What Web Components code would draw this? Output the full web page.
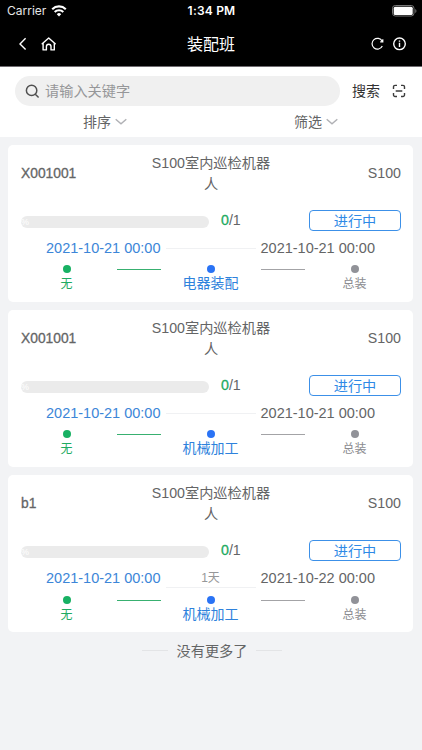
<!DOCTYPE html>
<html lang="zh-CN">
<head>
<meta charset="UTF-8">
<meta name="viewport" content="width=device-width, initial-scale=1">
<title>装配班</title>
<style>
  body {
    margin: 0;
    background-color: #f2f3f5;
    font-family: "Liberation Sans", "Noto Sans CJK SC", sans-serif;
    font-size: 14px;
    color: #646566;
  }
</style>
</head>
<body>
<work-app></work-app>

<script>
class StatusBar extends HTMLElement {
  constructor() {
    super();
    this.attachShadow({ mode: 'open' });
  }

  connectedCallback() {
    this.shadowRoot.innerHTML = `
      <style>
        :host {
          display: grid;
          grid-template-columns: 1fr auto 1fr;
          align-items: center;
          height: 22px;
          padding: 0 5px 0 7px;
          background-color: #000;
          color: #fff;
          font: 12px/22px Inter, sans-serif;
        }
        .carrier { display: flex; align-items: center; gap: 5px; color: #e6e6e6; }
        .time { font-weight: 600; letter-spacing: .2px; margin-left: -1px; }
        .battery { justify-self: end; }
        svg { display: block; }
      </style>
      <div class="carrier">
        <span>Carrier</span>
        <svg width="16" height="12" viewBox="0 0 16 12" fill="none" stroke="#fff" stroke-width="2.1">
          <path d="M1.2 4.2a9.7 9.7 0 0 1 13.6 0M3.7 7a6.1 6.1 0 0 1 8.6 0"/>
          <path d="M8 11.4 5.8 9.2a3.1 3.1 0 0 1 4.4 0z" fill="#fff" stroke="none"/>
        </svg>
      </div>
      <div class="time">1:34 PM</div>
      <svg class="battery" width="25" height="12" viewBox="0 0 25 12">
        <rect x=".5" y=".5" width="21.5" height="10.5" rx="2.8" fill="none" stroke="#777"/>
        <rect x="1.7" y="1.7" width="19" height="8.2" rx="1.5" fill="#fff"/>
        <path d="M23.3 4v4c1.5-.7 1.5-3.3 0-4z" fill="#777"/>
      </svg>
    `;
  }
}

class NavBar extends HTMLElement {
  constructor() {
    super();
    this.attachShadow({ mode: 'open' });
  }

  connectedCallback() {
    this.shadowRoot.innerHTML = `
      <style>
        :host {
          display: grid;
          grid-template-columns: 1fr auto 1fr;
          align-items: center;
          height: 44px;
          padding: 0 15px 0 18px;
          background-color: #000;
          color: #fff;
          border-bottom: 1px solid #6f6b70;
        }
        .title { font-size: 16px; line-height: 24px; margin-left: -3px; padding-top: 1px; }
        .left, .right { display: flex; align-items: center; }
        .left { gap: 13px; }
        .right { gap: 8px; justify-content: flex-end; }
        svg { display: block; fill: none; stroke: #fff; stroke-width: 1.4; }
      </style>
      <div class="left">
        <svg width="10" height="14" viewBox="0 0 10 14"><path d="m7.6 1.3-5.6 5.6 5.6 5.6"/></svg>
        <svg width="16" height="14" viewBox="0 0 16 14" stroke-linejoin="round" stroke-linecap="round">
          <path d="M1.2 6.7 7.7.9l6.5 5.8M2.1 6.1v6.8h3.3V9.6a2.3 2.3 0 0 1 4.6 0v3.3h3.3V6.1"/>
        </svg>
      </div>
      <div class="title"><slot></slot></div>
      <div class="right">
        <svg width="14" height="14" viewBox="0 0 14 14" style="stroke-width:1.2">
          <path d="M11.3 9.1A5.4 5.4 0 1 1 11.2 4.2M11.8 2.2v2.7H9.2"/>
        </svg>
        <svg width="14" height="14" viewBox="0 0 14 14">
          <circle cx="6.5" cy="6.8" r="5.8"/><path d="M6.5 3.4v1.3M6.5 5.8v4.3"/>
        </svg>
      </div>
    `;
  }
}

class SearchPanel extends HTMLElement {
  constructor() {
    super();
    this.attachShadow({ mode: 'open' });
  }

  connectedCallback() {
    this.shadowRoot.innerHTML = `
      <style>
        :host { display: block; height: 70px; background-color: #fff; }
        .row { display: flex; align-items: center; padding: 9px 16px 0 15px; }
        .field {
          display: flex;
          align-items: center;
          gap: 6px;
          box-sizing: border-box;
          width: 325px;
          height: 30px;
          padding-left: 10px;
          border-radius: 15px;
          background-color: #f0f0f0;
          color: #969799;
        }
        .field span { font-size: 14.2px; margin: -2px 0 0 -1px; }
        .action { margin: -2px 12px 0 12px; color: #323233; }
        .filters { display: flex; margin-top: 5px; line-height: 22px; }
        .filter { flex: 1; display: flex; justify-content: center; align-items: center; gap: 4px; margin-left: -1px; }
        svg { display: block; fill: none; }
      </style>
      <div class="row">
        <div class="field">
          <svg width="15" height="15" viewBox="0 0 15 15" stroke="#505050" stroke-width="1.5">
            <circle cx="6.6" cy="6.4" r="5.2"/><path d="m10.3 10.2 3.3 3.3"/>
          </svg>
          <span>请输入关键字</span>
        </div>
        <span class="action">搜索</span>
        <svg width="14" height="14" viewBox="0 0 14 14" stroke="#3c3c3c" stroke-width="1.4">
          <path d="M5 1.4H3a1.5 1.5 0 0 0-1.5 1.5v2M9 1.4h2a1.5 1.5 0 0 1 1.5 1.5v2M1.5 9v2A1.5 1.5 0 0 0 3 12.5h2M12.5 9v2a1.5 1.5 0 0 1-1.5 1.5H9M3.7 7h6.6"/>
        </svg>
      </div>
      <div class="filters">
        ${['排序', '筛选'].map((name) => `
          <div class="filter">
            <span>${name}</span>
            <svg width="12" height="8" viewBox="0 0 12 8" stroke="#b0b1b5" stroke-width="1.4"><path d="m.7 1.2 5.3 4.6 5.3-4.6"/></svg>
          </div>`).join('')}
      </div>
    `;
  }
}

class StepNode extends HTMLElement {
  constructor() {
    super();
    this.attachShadow({ mode: 'open' });
  }

  connectedCallback() {
    this.shadowRoot.innerHTML = `
      <style>
        :host {
          display: flex;
          flex-direction: column;
          align-items: center;
          width: 100px;
          color: #8b8c90;
          font-size: 12px;
          line-height: 22px;
        }
        :host([state="done"]) { color: #1fab62; }
        :host([state="active"]) { color: #2e82dc; font-size: 14px; line-height: 21px; }
        i { width: 8px; height: 8px; border-radius: 50%; background-color: #919298; }
        :host([state="done"]) i { background-color: #18b163; }
        :host([state="active"]) i { background-color: #2a73f5; }
      </style>
      <i></i>
      <slot></slot>
    `;
  }
}

class TaskCard extends HTMLElement {
  constructor() {
    super();
    this.attachShadow({ mode: 'open' });
  }

  connectedCallback() {
    const get = (name) => this.getAttribute(name) || '';
    this.shadowRoot.innerHTML = `
      <style>
        :host {
          display: block;
          box-sizing: border-box;
          height: 157px;
          padding: 8px 12px 0 13px;
          border-radius: 5px;
          background-color: #fff;
        }
        .head { display: grid; grid-template-columns: 1fr 126px 1fr; align-items: center; height: 41px; }
        .code { -webkit-text-stroke: .3px; font-size: 13.8px; }
        .name { text-align: center; font-size: 14.2px; line-height: 20.5px; }
        .model { text-align: right; font-size: 14.2px; margin-top: -1px; }
        .progress { display: flex; align-items: center; height: 21px; margin-top: 16px; }
        .track {
          width: 188px;
          height: 12px;
          margin-top: 3px;
          border-radius: 6px;
          background-color: #ebebeb;
          color: #fff;
          font-size: 9px;
          line-height: 12px;
          overflow: hidden;
        }
        .count { margin: -2px 0 0 12px; font-size: 14.2px; }
        .count b { color: #1fab62; font-weight: normal; -webkit-text-stroke: .3px; }
        .state {
          box-sizing: border-box;
          width: 92px;
          height: 21px;
          margin-left: auto;
          border: 1px solid #3c90e8;
          border-radius: 4px;
          color: #2e8ae6;
          font-size: 14.2px;
          line-height: 21px;
          text-align: center;
        }
        .dates { display: flex; align-items: center; height: 20px; margin: 7px 26px 0 25px; font-size: 14.5px; white-space: nowrap; }
        .start { color: #3c86d8; }
        .days {
          flex: 1;
          box-sizing: border-box;
          margin: 0 5px 0 5px;
          border-bottom: 1px solid #f0f1f3;
          color: #969799;
          font-size: 12px;
          line-height: 18px;
          text-align: center;
        }
        .steps { display: flex; justify-content: center; margin: 7px 1px 0 0; }
        :host([days]) .steps { margin-top: 8px; }
        .steps hr { width: 44px; height: 1px; margin: 4px 0 0; border: 0; background-color: #a3a3a6; flex: none; }
        .steps hr.done { background-color: #38b070; }
        .steps step-node { flex: none; }
      </style>
      <div class="head">
        <div class="code">${get('code')}</div>
        <div class="name"><slot></slot></div>
        <div class="model">S100</div>
      </div>
      <div class="progress">
        <div class="track">%</div>
        <div class="count"><b>0</b>/1</div>
        <div class="state">进行中</div>
      </div>
      <div class="dates">
        <span class="start">${get('start')}</span>
        <span class="days">${get('days')}</span>
        <span>${get('end')}</span>
      </div>
      <div class="steps">
        <step-node state="done">无</step-node>
        <hr class="done">
        <step-node state="active">${get('step')}</step-node>
        <hr>
        <step-node>总装</step-node>
      </div>
    `;
  }
}

class ListEnd extends HTMLElement {
  constructor() {
    super();
    this.attachShadow({ mode: 'open' });
  }

  connectedCallback() {
    this.shadowRoot.innerHTML = `
      <style>
        :host { display: flex; align-items: center; justify-content: center; gap: 9px; height: 36px; font-size: 14.2px; }
        :host::before, :host::after { content: ""; width: 26px; height: 1px; background-color: #e3e4e6; }
      </style>
      <slot></slot>
    `;
  }
}

class WorkApp extends HTMLElement {
  constructor() {
    super();
    this.attachShadow({ mode: 'open' });
  }

  connectedCallback() {
    this.shadowRoot.innerHTML = `
      <style>
        :host { display: block; height: 750px; overflow: hidden; }
        .list { display: flex; flex-direction: column; gap: 8px; padding: 8px 9px 0 8px; }
        list-end { padding-left: 2px; }
      </style>
      <status-bar></status-bar>
      <nav-bar>装配班</nav-bar>
      <search-panel></search-panel>
      <div class="list">
        <task-card code="X001001" start="2021-10-21 00:00" end="2021-10-21 00:00" step="电器装配">S100室内巡检机器人</task-card>
        <task-card code="X001001" start="2021-10-21 00:00" end="2021-10-21 00:00" step="机械加工">S100室内巡检机器人</task-card>
        <task-card code="b1" start="2021-10-21 00:00" end="2021-10-22 00:00" days="1天" step="机械加工">S100室内巡检机器人</task-card>
      </div>
      <list-end>没有更多了</list-end>
    `;
  }
}

customElements.define('status-bar', StatusBar);
customElements.define('nav-bar', NavBar);
customElements.define('search-panel', SearchPanel);
customElements.define('step-node', StepNode);
customElements.define('task-card', TaskCard);
customElements.define('list-end', ListEnd);
customElements.define('work-app', WorkApp);
</script>
</body>
</html>
